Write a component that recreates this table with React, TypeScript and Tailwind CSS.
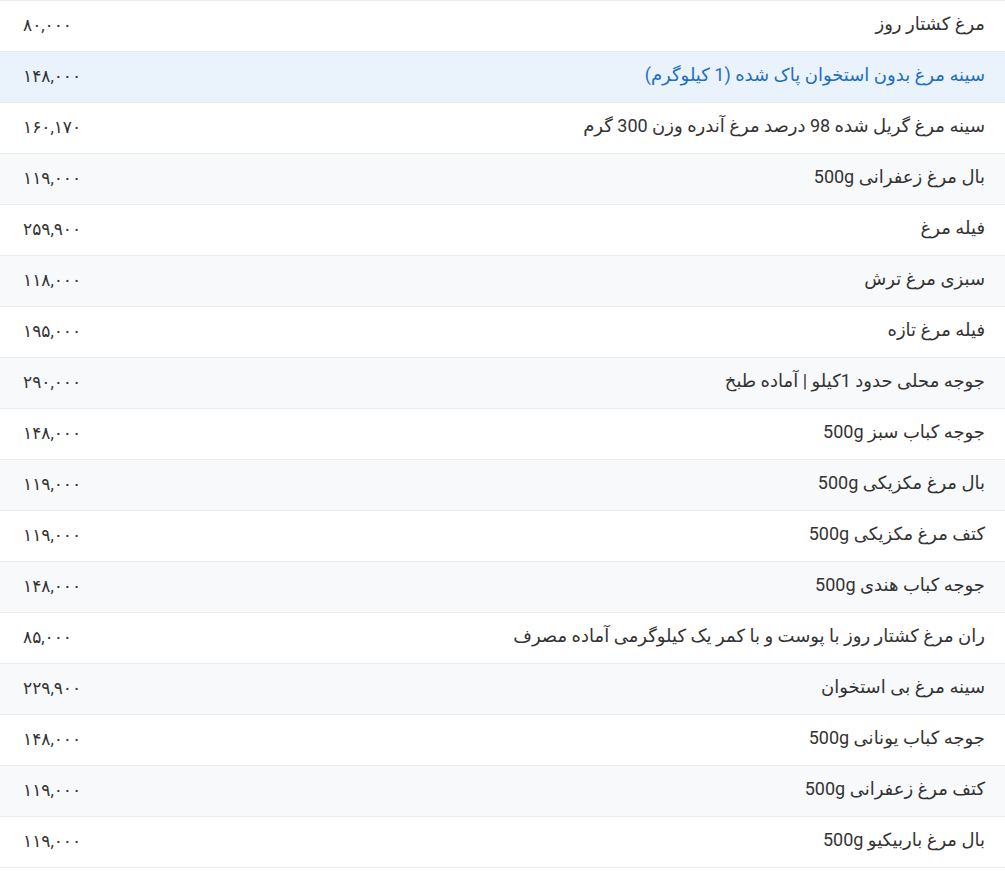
const items = [
  { name: "مرغ کشتار روز", price: "۸۰,۰۰۰" },
  { name: "سینه مرغ بدون استخوان پاک شده (1 کیلوگرم)", price: "۱۴۸,۰۰۰", active: true },
  { name: "سینه مرغ گریل شده 98 درصد مرغ آندره وزن 300 گرم", price: "۱۶۰,۱۷۰" },
  { name: "بال مرغ زعفرانی 500g", price: "۱۱۹,۰۰۰" },
  { name: "فیله مرغ", price: "۲۵۹,۹۰۰" },
  { name: "سبزی مرغ ترش", price: "۱۱۸,۰۰۰" },
  { name: "فیله مرغ تازه", price: "۱۹۵,۰۰۰" },
  { name: "جوجه محلی حدود 1کیلو | آماده طبخ", price: "۲۹۰,۰۰۰" },
  { name: "جوجه کباب سبز 500g", price: "۱۴۸,۰۰۰" },
  { name: "بال مرغ مکزیکی 500g", price: "۱۱۹,۰۰۰" },
  { name: "کتف مرغ مکزیکی 500g", price: "۱۱۹,۰۰۰" },
  { name: "جوجه کباب هندی 500g", price: "۱۴۸,۰۰۰" },
  { name: "ران مرغ کشتار روز با پوست و با کمر یک کیلوگرمی آماده مصرف", price: "۸۵,۰۰۰" },
  { name: "سینه مرغ بی استخوان", price: "۲۲۹,۹۰۰" },
  { name: "جوجه کباب یونانی 500g", price: "۱۴۸,۰۰۰" },
  { name: "کتف مرغ زعفرانی 500g", price: "۱۱۹,۰۰۰" },
  { name: "بال مرغ باربیکیو 500g", price: "۱۱۹,۰۰۰" },
];

export default function App() {
  return (
    <div
      dir="rtl"
      className="w-[1005px] bg-white text-[#333] font-['Roboto','DejaVu_Sans',sans-serif]"
    >
      <div className="border-t border-[#e9ecef]">
        {items.map((item, i) => (
          <div
            key={i}
            className={`flex h-[51px] items-center justify-between border-b border-[#e9ecef] pr-5 pl-[23px] text-[18px] ${
              item.active
                ? "bg-[#eaf2fb] text-[#1d6fc2]"
                : i % 2 === 1
                ? "bg-[#f8f9fa]"
                : "bg-white"
            }`}
          >
            <span className="mb-[5px]">{item.name}</span>
            <span className="text-[#333] text-[17px]">{item.price}</span>
          </div>
        ))}
      </div>
    </div>
  );
}
